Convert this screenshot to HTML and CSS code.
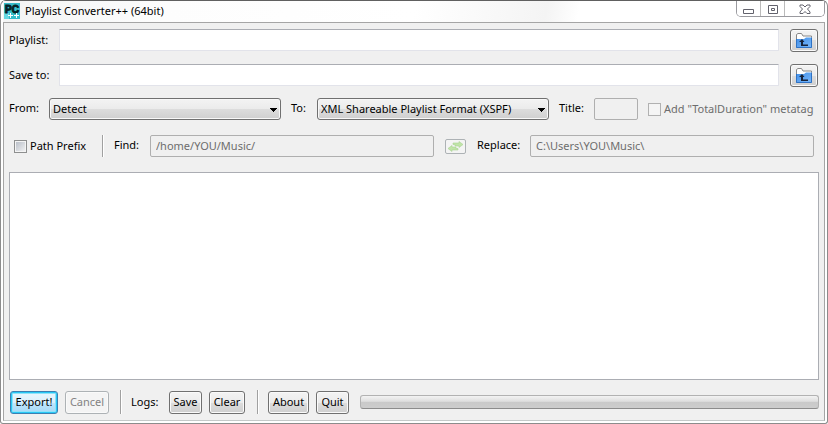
FILE: index.html
```html
<!DOCTYPE html>
<html lang="en">
<head>
<meta charset="utf-8">
<title>Playlist Converter++ (64bit)</title>
<link rel="stylesheet" href="styles.css">
</head>
<body>
<svg width="0" height="0" class="defs" aria-hidden="true">
  <defs>
    <linearGradient id="blue" x1="0" y1="0" x2="1" y2="1">
      <stop offset="0" stop-color="#3f8ee8"/><stop offset="1" stop-color="#7ab8fa"/>
    </linearGradient>
    <symbol id="folder" viewBox="0 0 18 17">
      <path d="M1.500 9V2.500L3 1.500h3.500L8 4h8.500v4" fill="#fff" stroke="#888"/>
      <path d="M1 7h8l2-1.500h6V16H1z" fill="url(#blue)"/>
      <path d="M1.500 7v8.500h15V6" fill="none" stroke="#2f72c4"/>
      <path d="M4 10l3-3 2.500 3H8v2.500h5V14H6v-4z" fill="#17233a"/>
    </symbol>
  </defs>
</svg>
<div class="window">
  <header class="titlebar">
    <svg class="logo" width="16" height="16" viewBox="0 0 16 16" aria-hidden="true">
      <rect width="16" height="16" fill="#36bccb"/>
      <rect y="10" width="5" height="6" fill="#66d8e2"/>
      <text x="1" y="10" class="logo-name">PC</text>
      <path d="M4 12.500h5M6.500 10v5M10 12.500h5M12.500 10v5" stroke="#fff" stroke-width="1"/>
    </svg>
    <h1 class="title">Playlist Converter++ (64bit)</h1>
    <div class="controls">
      <button class="control" aria-label="Minimize">
        <svg width="12" height="12" viewBox="0 0 12 12"><path d="M.5 6.500h10v4H.5z" fill="#fff" stroke="#62626c"/></svg>
      </button>
      <button class="control" aria-label="Maximize">
        <svg width="12" height="12" viewBox="0 0 12 12"><path d="M1.500 2.500h9v8h-9z" fill="#fff" stroke="#62626c"/><path d="M4.500 5.500h3v2h-3z" fill="#fff" stroke="#62626c"/></svg>
      </button>
      <button class="control control-close" aria-label="Close">
        <svg width="12" height="12" viewBox="0 0 12 12"><path d="M1 2h3l2 2 2-2h3v1.500L8.500 6 11 9v1.500H8L6 8.500l-2 2H1V9l2.500-3L1 3.500z" fill="#fff" stroke="#62626c"/></svg>
      </button>
    </div>
  </header>
  <main class="panel">
    <div class="row file-row">
      <label class="file-label" for="playlist">Playlist:</label>
      <input class="field" id="playlist" type="text">
      <button class="button browse" aria-label="Browse playlist"><svg width="18" height="17"><use href="#folder"/></svg></button>
    </div>
    <div class="row file-row">
      <label class="file-label" for="target">Save to:</label>
      <input class="field" id="target" type="text">
      <button class="button browse" aria-label="Browse target"><svg width="18" height="17"><use href="#folder"/></svg></button>
    </div>
    <div class="row format-row">
      <label class="from-label" for="from">From:</label>
      <select class="select" id="from"><option>Detect</option></select>
      <label class="to-label" for="to">To:</label>
      <select class="select" id="to"><option>XML Shareable Playlist Format (XSPF)</option></select>
      <label class="title-label" for="list-title">Title:</label>
      <input class="field title-field" id="list-title" type="text" disabled>
      <label class="check check-off"><input class="box" type="checkbox" disabled>Add "TotalDuration" metatag</label>
    </div>
    <div class="row prefix-row">
      <label class="check"><input class="box" type="checkbox">Path Prefix</label>
      <span class="divider"></span>
      <label class="find-label" for="find">Find:</label>
      <input class="field" id="find" type="text" value="/home/YOU/Music/" disabled>
      <button class="swap" aria-label="Swap" disabled>
        <svg width="17" height="11" viewBox="0 0 17 11"><path d="M6 2h6V.5L16 3.500l-4 3V5H8V3.500H6zM11 9H5v1.500L1 7.500l4-3V6h4v1.500h2z" fill="#c0e4a8" stroke="#a9d392" stroke-width=".6"/></svg>
      </button>
      <label class="replace-label" for="replace">Replace:</label>
      <input class="field" id="replace" type="text" value="C:\Users\YOU\Music\" disabled>
    </div>
    <textarea class="log" aria-label="Log" readonly></textarea>
    <div class="row actions">
      <button class="button export">Export!</button>
      <button class="button cancel" disabled>Cancel</button>
      <span class="divider"></span>
      <span class="logs-label">Logs:</span>
      <button class="button save">Save</button>
      <button class="button clear">Clear</button>
      <span class="divider"></span>
      <button class="button about">About</button>
      <button class="button quit">Quit</button>
      <div class="progress" role="progressbar" aria-label="Progress" aria-valuenow="0"></div>
    </div>
  </main>
</div>
</body>
</html>
```
FILE: styles.css
```css
* { box-sizing: border-box; }
body {
  margin: 0;
  background: #fff;
  color: #000;
  font: 11px/16px "Noto Sans", "Open Sans", sans-serif;
}
button, input, select, textarea { font: inherit; color: inherit; margin: 0; }
.defs { position: absolute; }
.window {
  display: flex;
  flex-direction: column;
  min-height: 100vh;
  padding: 0 2px 2px;
  border: 1px solid #8c8c8c;
  border-top-color: #606060;
  border-radius: 6px 6px 3px 3px;
  background: #fff;
}
.titlebar {
  display: flex;
  align-items: center;
  height: 21px;
  padding: 0 0 1px 1px;
  background: linear-gradient(100deg, #f3f4f4 0, #fdfdfd 20%, #fff 50%, #f4f4f4 66%, #fff 70%);
}
.logo-name { font: 700 10px "Liberation Sans", sans-serif; fill: #062226; stroke: #062226; stroke-width: 1px; }
.title { flex: 1; margin: 0 0 0 5px; padding-bottom: 1px; font-size: 11px; font-weight: 400; }
.controls {
  display: flex;
  align-self: flex-start;
  height: 16px;
  border: 1px solid #9a9a9f;
  border-top: 0;
  border-radius: 0 0 5px 5px;
  overflow: hidden;
}
.control {
  display: flex;
  align-items: center;
  justify-content: center;
  width: 24px;
  padding: 0;
  border: 0;
  border-right: 1px solid #bbb;
  background: #fff;
}
.control-close { width: 39px; border-right: 0; }
.panel {
  flex: 1;
  display: flex;
  flex-direction: column;
  padding: 6px 5px;
  border: 1px solid #a5a5a5;
  border-bottom-color: #c5c9c9;
  background: #f0f0f0;
}
.row { display: flex; align-items: center; }
.row > label:not(.check) { padding-bottom: 2px; }
.file-row { height: 23px; margin-bottom: 12px; padding-right: 1px; }
.file-row + .format-row { margin-top: -1px; }
.file-row .field { align-self: flex-start; }
.file-label { width: 50px; }
.from-label { width: 40px; }
.to-label { width: 26px; }
.title-label { width: 35px; }
.find-label { width: 36px; }
.replace-label { width: 53px; }
.logs-label { width: 38px; }
.field {
  flex: 1;
  min-width: 0;
  height: 22px;
  padding: 0 5px 2px;
  border: 1px solid #e2e3ea;
  border-top-color: #abadb3;
  border-radius: 1px;
  background: #fff;
}
.field:disabled { border-color: #afafaf; border-radius: 2px; background: #f0f0f0; color: #6d6d6d; }
.title-field { flex: 0 0 44px; }
.button {
  height: 23px;
  padding: 0;
  border: 1px solid #707070;
  border-radius: 3px;
  background: linear-gradient(#f3f3f3 0, #ebebeb 50%, #ddd 50%, #cfcfcf 100%);
  box-shadow: inset 0 0 0 1px #fafafa;
}
.browse { display: flex; align-items: center; justify-content: center; width: 28px; margin-left: 11px; }
.format-row { height: 22px; margin-bottom: 15px; padding-right: 5px; }
.select {
  appearance: none;
  flex: 1;
  min-width: 0;
  height: 22px;
  margin-right: 10px;
  padding: 0 3px;
  border: 1px solid #707070;
  border-radius: 3px;
  background:
    linear-gradient(#000, #000) right 3px top 9px / 7px 1px no-repeat,
    linear-gradient(#000, #000) right 4px top 10px / 5px 1px no-repeat,
    linear-gradient(#000, #000) right 5px top 11px / 3px 1px no-repeat,
    linear-gradient(#000, #000) right 6px top 12px / 1px 1px no-repeat,
    linear-gradient(#f3f3f3 0, #ebebeb 50%, #ddd 50%, #cfcfcf 100%);
  box-shadow: inset 0 0 0 1px #f8f8f8;
}
.check { display: flex; align-items: center; gap: 3px; white-space: nowrap; }
.check-off { width: 166px; margin-left: 10px; color: #6d6d6d; }
.box {
  appearance: none;
  flex: none;
  width: 13px;
  height: 13px;
  border: 1px solid #8e8f8f;
  background: linear-gradient(135deg, #b4bac4, #f6f6f6);
  box-shadow: inset 0 0 0 1px #f4f4f4;
}
.box:disabled { border-color: #b1b1b1; background: #f5f5f5; }
.prefix-row { height: 22px; margin-bottom: 15px; padding: 0 5px; }
.prefix-row .check { width: 88px; }
.divider { align-self: stretch; width: 2px; margin-right: 10px; border-left: 1px solid #a0a0a0; border-right: 1px solid #fff; }
.swap {
  display: flex;
  align-items: center;
  justify-content: center;
  width: 21px;
  height: 15px;
  margin: 0 11px;
  padding: 0;
  border: 1px solid #adb2b5;
  border-radius: 2px;
  background: #f4f4f4;
}
.log {
  flex: 1;
  min-height: 80px;
  margin-bottom: 10px;
  border: 1px solid #abadb3;
  background: #fff;
  resize: none;
}
.actions { height: 24px; padding-left: 1px; }
.actions .divider { margin-right: 9px; }
.export {
  width: 48px;
  border-color: #3c7fb1;
  background: linear-gradient(#eaf6fd 0, #d9f0fc 50%, #bee6fd 50%, #a7d9f5 100%);
  box-shadow: inset 0 0 0 1px #28c8f5, inset 0 0 0 2px #8fe2fa;
}
.cancel { width: 44px; margin: 0 11px 0 7px; border-color: #adb2b5; background: #f4f4f4; color: #838383; }
.save { width: 33px; margin-right: 7px; }
.clear { width: 36px; margin-right: 12px; }
.about { width: 41px; margin-right: 7px; }
.quit { width: 33px; margin-right: 11px; }
.progress {
  flex: 1;
  height: 14px;
  border: 1px solid #b2b2b2;
  border-bottom-color: #8c8c8c;
  border-radius: 3px;
  background: linear-gradient(#f3f3f3 0, #dedede 45%, #c9c9c9 50%, #cdcdcd 100%);
}
```
